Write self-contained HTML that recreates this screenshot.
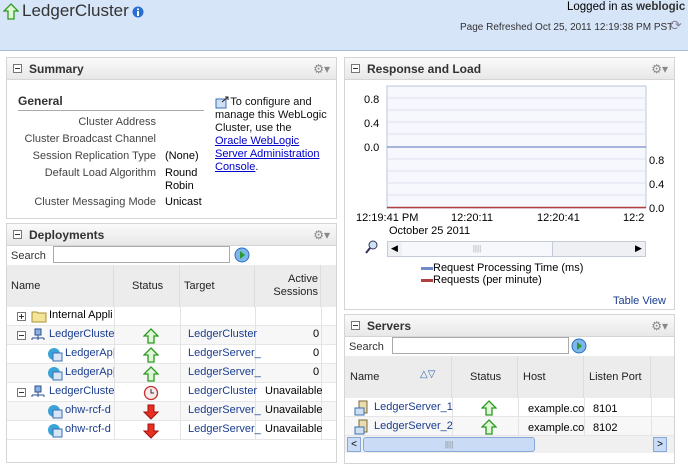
<!DOCTYPE html>
<html><head><style>
*{margin:0;padding:0;box-sizing:border-box}
body{width:688px;height:457px;overflow:hidden;background:#fff;font-family:"Liberation Sans","DejaVu Sans",sans-serif;font-size:11px;color:#000;position:relative}
.a{position:absolute;white-space:nowrap}
.hdr{left:0;top:0;width:688px;height:51px;background:#d6e5f8;border-bottom:1px solid #a9bed6}
.panel{position:absolute;border:1px solid #d5d5d5;background:#fff}
.ph{position:absolute;left:0;top:0;right:0;height:22px;background:linear-gradient(#fafafa,#e8e8e8);border-bottom:1px solid #d5d5d5}
.ph b{position:absolute;left:22px;top:4px;font-size:12px;color:#333}
.tog{position:absolute;left:6px;top:6px;width:9px;height:9px;border:1px solid #777;background:#fff}
.tog:after{content:"";position:absolute;left:1px;top:3px;width:5px;height:1px;background:#333}
.plus:before{content:"";position:absolute;left:3px;top:1px;width:1px;height:5px;background:#333}
.gear{position:absolute;right:6px;top:4px;font-size:12px;color:#888}
.lnk{color:#1a3d8f}
.th{background:#ececec;border-right:1px solid #ddd;position:absolute;color:#222}
.row{position:absolute;border-bottom:1px solid #e6e6e6}
.lb{position:absolute;right:180px;color:#444;text-align:right;white-space:nowrap}
</style></head><body>
<div class="a hdr"></div>
<svg class="a" style="left:3px;top:3px" width="16" height="17" viewBox="0 0 16 17"><path d="M8 1L15 8H11V16H5V8H1Z" fill="#dff7d6" stroke="#2a9a20" stroke-width="1.3"/></svg>
<div class="a" style="left:22px;top:1px;font-size:17px;color:#333">LedgerCluster</div>
<svg class="a" style="left:132px;top:6px" width="12" height="12"><circle cx="6" cy="6" r="5.5" fill="#2a6fd0"/><rect x="5" y="5" width="2" height="5" fill="#fff"/><rect x="5" y="2.5" width="2" height="1.6" fill="#fff"/></svg>
<div class="a" style="left:567px;top:1px;font-size:11.5px">Logged in as <b style="color:#333">weblogic</b></div>
<div class="a" style="left:460px;top:22px;font-size:10px;color:#333">Page Refreshed Oct 25, 2011 12:19:38 PM PST</div>
<div class="a" style="left:670px;top:17px;font-size:14px;color:#889">⟳</div>

<!-- Summary -->
<div class="panel" style="left:6px;top:57px;width:331px;height:162px">
<div class="ph"><div class="tog"></div><b>Summary</b><span class="gear">⚙▾</span></div>
<div class="a" style="left:11px;top:36px;font-weight:bold;font-size:12px;color:#333">General</div>
<div class="a" style="left:11px;top:52px;width:186px;height:1px;background:#aaa"></div>
<div class="lb" style="top:58px">Cluster Address</div>
<div class="lb" style="top:75px">Cluster Broadcast Channel</div>
<div class="lb" style="top:92px">Session Replication Type</div>
<div class="lb" style="top:109px">Default Load Algorithm</div>
<div class="lb" style="top:138px">Cluster Messaging Mode</div>
<div class="a" style="left:158px;top:92px">(None)</div>
<div class="a" style="left:158px;top:109px;line-height:13px">Round<br>Robin</div>
<div class="a" style="left:158px;top:138px">Unicast</div>
<svg class="a" style="left:208px;top:38px" width="14" height="13"><rect x="1" y="3" width="10" height="9" fill="#cfe0f5" stroke="#3a6fb0"/><path d="M7 6L13 1M10 1H13V4" stroke="#222" fill="none"/></svg>
<div class="a" style="left:208px;top:38px;line-height:13px;color:#111">&nbsp;&nbsp;&nbsp;&nbsp;&nbsp;To configure and<br>manage this WebLogic<br>Cluster, use the<br><u style="color:#00c">Oracle WebLogic</u><br><u style="color:#00c">Server Administration</u><br><u style="color:#00c">Console</u>.</div>
</div>

<!-- Deployments -->
<div class="panel" style="left:6px;top:223px;width:331px;height:240px;overflow:hidden">
<div class="ph"><div class="tog"></div><b>Deployments</b><span class="gear">⚙▾</span></div>
<div class="a" style="left:4px;top:26px;color:#333">Search</div>
<div class="a" style="left:46px;top:22px;width:177px;height:17px;border:1px solid #aaa"></div>
<svg class="a" style="left:227px;top:23px" width="16" height="16"><circle cx="8" cy="8" r="7" fill="#7fb6ea" stroke="#2a6fc0"/><path d="M6 4L11 8L6 12Z" fill="#2a9a30"/></svg>
<div class="th" style="left:0;top:41px;width:107px;height:42px"><span class="a" style="left:4px;top:15px">Name</span></div>
<div class="th" style="left:107px;top:41px;width:66px;height:42px"><span class="a" style="left:18px;top:15px">Status</span></div>
<div class="th" style="left:173px;top:41px;width:75px;height:42px"><span class="a" style="left:4px;top:15px">Target</span></div>
<div class="th" style="left:248px;top:41px;width:66px;height:42px;text-align:right"><span class="a" style="right:2px;top:8px;line-height:13px;text-align:right">Active<br>Sessions</span></div>
<div class="th" style="left:314px;top:41px;width:20px;height:42px"></div>
<div style="position:absolute;left:0;top:83px;width:330px;height:134px;font-size:11px">
 <div class="row" style="left:0;top:0;width:330px;height:19px"><div class="tog plus" style="left:10px;top:5px"></div><svg class="a" style="left:24px;top:3px" width="16" height="13"><path d="M1 2H6L7 3H15V12H1Z" fill="#f3e49a" stroke="#a88f30"/></svg><span class="a" style="left:42px;top:2px">Internal Appli</span></div>
 <div class="row" style="left:0;top:19px;width:330px;height:19px;background:#f7f7f7"><div class="tog" style="left:10px;top:5px"></div><svg class="a" style="left:23px;top:2px" width="16" height="15"><rect x="5" y="1" width="6" height="6" fill="#8ab2de" stroke="#2a4f8f"/><path d="M8 7V10M2 10H14M2 10V12M8 10V12M14 10V12" stroke="#2a4f8f"/></svg><span class="a lnk" style="left:42px;top:2px">LedgerCluste</span></div>
 <div class="row" style="left:0;top:38px;width:330px;height:19px"><svg class="a" style="left:40px;top:2px" width="16" height="15"><circle cx="7" cy="7" r="6" fill="#3aa3d8"/><rect x="6" y="6" width="9" height="8" fill="#d6e6f8" stroke="#3a6fb0"/></svg><span class="a lnk" style="left:58px;top:2px">LedgerAp|</span></div>
 <div class="row" style="left:0;top:57px;width:330px;height:19px;background:#f7f7f7"><svg class="a" style="left:40px;top:2px" width="16" height="15"><circle cx="7" cy="7" r="6" fill="#3aa3d8"/><rect x="6" y="6" width="9" height="8" fill="#d6e6f8" stroke="#3a6fb0"/></svg><span class="a lnk" style="left:58px;top:2px">LedgerAp|</span></div>
 <div class="row" style="left:0;top:76px;width:330px;height:19px"><div class="tog" style="left:10px;top:5px"></div><svg class="a" style="left:23px;top:2px" width="16" height="15"><rect x="5" y="1" width="6" height="6" fill="#8ab2de" stroke="#2a4f8f"/><path d="M8 7V10M2 10H14M2 10V12M8 10V12M14 10V12" stroke="#2a4f8f"/></svg><span class="a lnk" style="left:42px;top:2px">LedgerCluste</span></div>
 <div class="row" style="left:0;top:95px;width:330px;height:19px;background:#f7f7f7"><svg class="a" style="left:40px;top:2px" width="16" height="15"><circle cx="7" cy="7" r="6" fill="#3aa3d8"/><rect x="6" y="6" width="9" height="8" fill="#d6e6f8" stroke="#3a6fb0"/></svg><span class="a lnk" style="left:58px;top:2px">ohw-rcf-d</span></div>
 <div class="row" style="left:0;top:114px;width:330px;height:19px"><svg class="a" style="left:40px;top:2px" width="16" height="15"><circle cx="7" cy="7" r="6" fill="#3aa3d8"/><rect x="6" y="6" width="9" height="8" fill="#d6e6f8" stroke="#3a6fb0"/></svg><span class="a lnk" style="left:58px;top:2px">ohw-rcf-d</span></div>
 <div class="a" style="left:107px;top:0;width:1px;height:133px;background:#e3e3e3"></div>
 <div class="a" style="left:173px;top:0;width:1px;height:133px;background:#e3e3e3"></div>
 <div class="a" style="left:248px;top:0;width:1px;height:133px;background:#e3e3e3"></div>
 <div class="a" style="left:314px;top:0;width:1px;height:133px;background:#e3e3e3"></div>
 <svg class="a" style="left:136px;top:21px" width="16" height="16"><path d="M8 1L15 8H11V15H5V8H1Z" fill="#dff7d6" stroke="#2a9a20" stroke-width="1.3"/></svg>
 <svg class="a" style="left:136px;top:40px" width="16" height="16"><path d="M8 1L15 8H11V15H5V8H1Z" fill="#dff7d6" stroke="#2a9a20" stroke-width="1.3"/></svg>
 <svg class="a" style="left:136px;top:59px" width="16" height="16"><path d="M8 1L15 8H11V15H5V8H1Z" fill="#dff7d6" stroke="#2a9a20" stroke-width="1.3"/></svg>
 <svg class="a" style="left:136px;top:78px" width="16" height="16"><circle cx="8" cy="8" r="6.5" fill="#fbe8e8" stroke="#c03030" stroke-width="1.3"/><path d="M8 4V8H11" stroke="#333" fill="none"/></svg>
 <svg class="a" style="left:136px;top:97px" width="16" height="16"><path d="M8 15L15 8H11V1H5V8H1Z" fill="#e83020" stroke="#a01010"/></svg>
 <svg class="a" style="left:136px;top:116px" width="16" height="16"><path d="M8 15L15 8H11V1H5V8H1Z" fill="#e83020" stroke="#a01010"/></svg>
 <span class="a lnk" style="left:181px;top:21px">LedgerCluster</span>
 <span class="a lnk" style="left:181px;top:40px">LedgerServer_</span>
 <span class="a lnk" style="left:181px;top:59px">LedgerServer_</span>
 <span class="a lnk" style="left:181px;top:78px">LedgerCluster</span>
 <span class="a lnk" style="left:181px;top:97px">LedgerServer_</span>
 <span class="a lnk" style="left:181px;top:116px">LedgerServer_</span>
 <span class="a" style="left:306px;top:21px">0</span><span class="a" style="left:306px;top:40px">0</span><span class="a" style="left:306px;top:59px">0</span>
 <span class="a" style="left:258px;top:78px">Unavailable</span><span class="a" style="left:258px;top:97px">Unavailable</span><span class="a" style="left:258px;top:116px">Unavailable</span>
</div>
</div>

<!-- Response and Load -->
<div class="panel" style="left:344px;top:57px;width:331px;height:253px">
<div class="ph"><div class="tog"></div><b>Response and Load</b><span class="gear">⚙▾</span></div>
<svg class="a" style="left:0;top:23px" width="330" height="228" font-family="Liberation Sans,sans-serif" font-size="11">
<rect x="42" y="5" width="259" height="122" fill="#f7f8fd" stroke="#b8c4dc"/>
<g stroke="#dde2ee"><line x1="42" y1="17" x2="301" y2="17"/><line x1="42" y1="29" x2="301" y2="29"/><line x1="42" y1="41" x2="301" y2="41"/><line x1="42" y1="53" x2="301" y2="53"/><line x1="42" y1="78" x2="301" y2="78"/><line x1="42" y1="90" x2="301" y2="90"/><line x1="42" y1="102" x2="301" y2="102"/><line x1="42" y1="114" x2="301" y2="114"/></g>
<line x1="42" y1="66" x2="301" y2="66" stroke="#8c9ed0" stroke-width="1.5"/>
<line x1="42" y1="126.5" x2="301" y2="126.5" stroke="#b04040" stroke-width="1.5"/>
<text x="19" y="22">0.8</text><text x="19" y="46">0.4</text><text x="19" y="70">0.0</text>
<text x="304" y="83">0.8</text><text x="304" y="107">0.4</text><text x="304" y="131">0.0</text>
<text x="11" y="140">12:19:41 PM</text><text x="106" y="140">12:20:11</text><text x="192" y="140">12:20:41</text><text x="278" y="140">12:2</text>
<text x="44" y="153">October 25 2011</text>
</svg>
<svg class="a" style="left:20px;top:182px" width="14" height="14"><circle cx="8" cy="5" r="4" fill="#cfe3f8" stroke="#335"/><line x1="5" y1="8" x2="1" y2="13" stroke="#335" stroke-width="2"/></svg>
<div class="a" style="left:42px;top:183px;width:259px;height:16px;border:1px solid #c5cbd6;background:#eef0f4"></div>
<div class="a" style="left:57px;top:184px;width:151px;height:14px;background:#f6f8fb;border-right:1px solid #c5cbd6;color:#aaa;font-size:8px;text-align:center;line-height:14px">||||</div>
<div class="a" style="left:46px;top:185px;font-size:9px">◀</div><div class="a" style="left:290px;top:185px;font-size:9px">▶</div>
<div class="a" style="left:76px;top:204px;line-height:12px"><span style="display:inline-block;width:12px;height:3px;background:#6f8cc8;vertical-align:middle"></span>Request Processing Time (ms)<br><span style="display:inline-block;width:12px;height:3px;background:#b04040;vertical-align:middle"></span>Requests (per minute)</div>
<div class="a lnk" style="left:268px;top:237px">Table View</div>
</div>

<!-- Servers -->
<div class="panel" style="left:344px;top:314px;width:331px;height:150px;overflow:hidden">
<div class="ph"><div class="tog"></div><b>Servers</b><span class="gear">⚙▾</span></div>
<div class="a" style="left:4px;top:26px;color:#333">Search</div>
<div class="a" style="left:47px;top:22px;width:177px;height:17px;border:1px solid #aaa"></div>
<svg class="a" style="left:226px;top:23px" width="16" height="16"><circle cx="8" cy="8" r="7" fill="#7fb6ea" stroke="#2a6fc0"/><path d="M6 4L11 8L6 12Z" fill="#2a9a30"/></svg>
<div class="th" style="left:0;top:41px;width:107px;height:42px"><span class="a" style="left:5px;top:15px">Name</span><span class="a" style="left:75px;top:13px;color:#36a;font-size:10px">△▽</span></div>
<div class="th" style="left:107px;top:41px;width:66px;height:42px"><span class="a" style="left:18px;top:15px">Status</span></div>
<div class="th" style="left:173px;top:41px;width:66px;height:42px"><span class="a" style="left:5px;top:15px">Host</span></div>
<div class="th" style="left:239px;top:41px;width:67px;height:42px"><span class="a" style="left:5px;top:15px">Listen Port</span></div>
<div class="th" style="left:306px;top:41px;width:30px;height:42px"></div>
<div class="row" style="left:0;top:83px;width:330px;height:19px"></div>
<div class="row" style="left:0;top:102px;width:330px;height:19px;background:#f7f7f7"></div>
<div class="a" style="left:107px;top:83px;width:1px;height:38px;background:#e3e3e3"></div>
<div class="a" style="left:173px;top:83px;width:1px;height:38px;background:#e3e3e3"></div>
<div class="a" style="left:239px;top:83px;width:1px;height:38px;background:#e3e3e3"></div>
<div class="a" style="left:306px;top:83px;width:1px;height:38px;background:#e3e3e3"></div>
<svg class="a" style="left:9px;top:85px" width="16" height="16"><rect x="5" y="1" width="8" height="12" fill="#e8dcb0" stroke="#7a6a3a"/><rect x="1" y="8" width="9" height="7" fill="#cfe0f5" stroke="#3a6fb0"/></svg>
<svg class="a" style="left:9px;top:104px" width="16" height="16"><rect x="5" y="1" width="8" height="12" fill="#e8dcb0" stroke="#7a6a3a"/><rect x="1" y="8" width="9" height="7" fill="#cfe0f5" stroke="#3a6fb0"/></svg>
<span class="a lnk" style="left:29px;top:86px">LedgerServer_1</span>
<span class="a lnk" style="left:29px;top:105px">LedgerServer_2</span>
<svg class="a" style="left:136px;top:85px" width="16" height="16"><path d="M8 1L15 8H11V15H5V8H1Z" fill="#dff7d6" stroke="#2a9a20" stroke-width="1.3"/></svg>
<svg class="a" style="left:136px;top:104px" width="16" height="16"><path d="M8 1L15 8H11V15H5V8H1Z" fill="#dff7d6" stroke="#2a9a20" stroke-width="1.3"/></svg>
<span class="a" style="left:183px;top:88px">example.co</span><span class="a" style="left:183px;top:107px">example.co</span>
<span class="a" style="left:248px;top:88px">8101</span><span class="a" style="left:248px;top:107px">8102</span>
<div class="a" style="left:0;top:121px;width:330px;height:17px;background:#f0f0f0"></div>
<div class="a" style="left:2px;top:122px;width:14px;height:15px;background:#c9dbf5;border:1px solid #8aa8d6;font-size:10px;text-align:center;line-height:13px">&lt;</div>
<div class="a" style="left:18px;top:122px;width:172px;height:15px;background:#c9dbf5;border:1px solid #8aa8d6;border-radius:3px;font-size:8px;color:#888;text-align:center;line-height:13px">||||</div>
<div class="a" style="left:308px;top:122px;width:14px;height:15px;background:#c9dbf5;border:1px solid #8aa8d6;font-size:10px;text-align:center;line-height:13px">&gt;</div>
</div>
</body></html>
